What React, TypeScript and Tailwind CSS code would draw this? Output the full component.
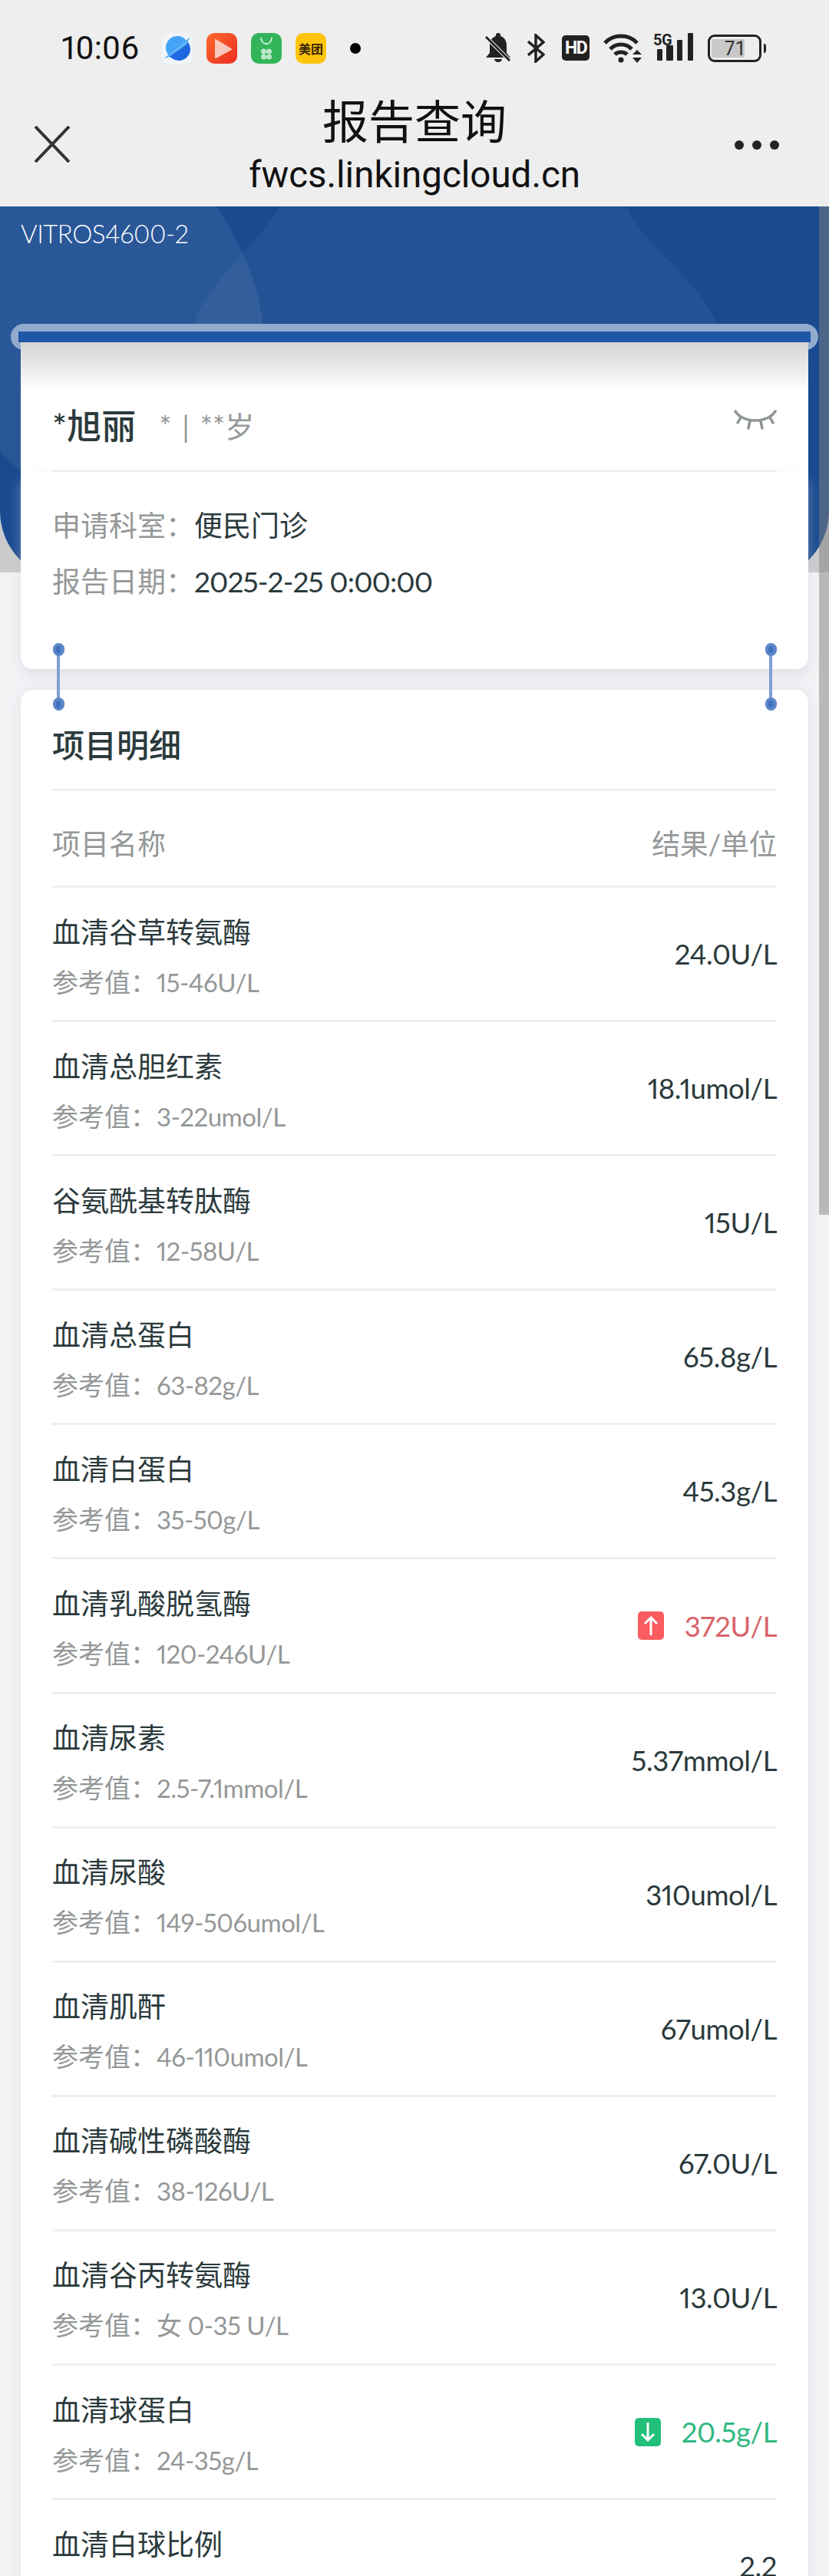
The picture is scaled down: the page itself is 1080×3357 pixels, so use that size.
const items = [
  { name: '血清谷草转氨酶', ref: '15-46U/L', value: '24.0U/L' },
  { name: '血清总胆红素', ref: '3-22umol/L', value: '18.1umol/L' },
  { name: '谷氨酰基转肽酶', ref: '12-58U/L', value: '15U/L' },
  { name: '血清总蛋白', ref: '63-82g/L', value: '65.8g/L' },
  { name: '血清白蛋白', ref: '35-50g/L', value: '45.3g/L' },
  { name: '血清乳酸脱氢酶', ref: '120-246U/L', value: '372U/L', flag: 'up' },
  { name: '血清尿素', ref: '2.5-7.1mmol/L', value: '5.37mmol/L' },
  { name: '血清尿酸', ref: '149-506umol/L', value: '310umol/L' },
  { name: '血清肌酐', ref: '46-110umol/L', value: '67umol/L' },
  { name: '血清碱性磷酸酶', ref: '38-126U/L', value: '67.0U/L' },
  { name: '血清谷丙转氨酶', ref: '女 0-35 U/L', value: '13.0U/L' },
  { name: '血清球蛋白', ref: '24-35g/L', value: '20.5g/L', flag: 'down' },
  { name: '血清白球比例', ref: '1.2-2.5', value: '2.2' },
]

function StatusBar() {
  return (
    <div className="flex h-[110px] items-center pl-[80px] pt-[15px] text-[#111]">
      <span className="w-[131px] font-['Roboto',sans-serif] text-[42px] leading-none">10:06</span>
      <div className="flex items-center gap-[18px]">
        <svg width="40" height="40" viewBox="0 0 40 40">
          <rect width="40" height="40" rx="10" fill="#f1f4f8" />
          <circle cx="20" cy="19" r="15" fill="#45a4f7" />
          <path d="M7 29 L34 12 A15 15 0 0 1 13 33 Z" fill="#1f68e0" />
          <path d="M3 33 L37 5 L32 15 L8 32 Z" fill="#5db5fa" />
        </svg>
        <svg width="40" height="40" viewBox="0 0 40 40">
          <defs>
            <linearGradient id="red" x1="0" y1="0" x2="1" y2="1">
              <stop offset="0" stopColor="#fb6a2c" />
              <stop offset="1" stopColor="#ec2c20" />
            </linearGradient>
          </defs>
          <rect width="40" height="40" rx="10" fill="url(#red)" />
          <path d="M12 9 L32 21 L12 32 Z" fill="#fbc9bb" strokeLinejoin="round" stroke="#fbc9bb" strokeWidth="2" />
        </svg>
        <svg width="40" height="40" viewBox="0 0 40 40">
          <rect width="40" height="40" rx="10" fill="#34b45a" />
          <path d="M13 6 C14 17 26 17 27 6" fill="none" stroke="#d3f0da" strokeWidth="2" />
          <circle cx="16.500" cy="24" r="3.500" fill="#bfe8c8" />
          <circle cx="23.500" cy="24" r="3.500" fill="#bfe8c8" />
          <circle cx="16.500" cy="31" r="3.500" fill="#bfe8c8" />
          <circle cx="23.500" cy="31" r="3.500" fill="#bfe8c8" />
        </svg>
        <div className="flex h-[40px] w-[40px] items-center justify-center rounded-[10px] bg-[#fec40c] font-['Noto_Sans_CJK_SC',sans-serif] text-[16px] font-bold leading-none text-[#3b2a05]">美团</div>
      </div>
      <span className="ml-[31px] h-[14px] w-[14px] rounded-full bg-black" />
      <div className="ml-[162px] w-[34px]">
        <svg width="34" height="40" viewBox="0 0 34 40">
          <path d="M17 0 a3 3 0 0 1 3 4 C26 6 28 11 28 17 V26 L33 32 H1 L6 26 V17 C6 11 8 6 14 4 a3 3 0 0 1 3 -4Z" fill="#222" />
          <path d="M12 34 H22 A5 4 0 0 1 12 34Z" fill="#222" />
          <path d="M1 5 L33 37" stroke="#eee" strokeWidth="5" />
          <path d="M1 5 L32 36" stroke="#222" strokeWidth="3" />
        </svg>
      </div>
      <svg className="ml-[21px]" width="23" height="38" viewBox="0 0 23 38" fill="none" stroke="#222" strokeWidth="3.500">
        <path d="M1 10 L21 27 L11 36 V2 L21 11 L1 28" />
      </svg>
      <div className="ml-[22px] flex h-[33px] w-[36px] items-center justify-center rounded-[5px] bg-[#222] font-['Roboto',sans-serif] text-[23px] font-bold leading-none tracking-[-1.5px] text-white">HD</div>
      <svg className="ml-[18px]" width="50" height="40" viewBox="0 0 50 40" fill="none" stroke="#222" strokeWidth="5">
        <path d="M2 13 C13 1 33 1 44 13" />
        <path d="M9 21 C16 13 30 13 37 21" />
        <path d="M15 28 C19 24 27 24 31 28" />
        <circle cx="23" cy="35" r="3.500" fill="#222" stroke="none" />
        <path d="M38 28 L44 22 L50 28Z" fill="#222" stroke="none" />
        <path d="M38 32 L50 32 L44 39Z" fill="#222" stroke="none" />
      </svg>
      <div className="relative ml-[15px] h-[40px] w-[54px]">
        <span className="absolute left-0 top-[-1px] font-['Roboto',sans-serif] text-[20px] font-bold leading-[20px] tracking-[-0.5px] text-[#222]">5G</span>
        <svg className="absolute left-[5px] top-0" width="49" height="36" viewBox="0 0 49 36" fill="#222">
          <rect x="0" y="21" width="7" height="15" rx="1" />
          <rect x="12" y="16" width="9" height="20" rx="1" />
          <rect x="26" y="9" width="7" height="27" rx="1" />
          <rect x="40" y="0" width="7" height="36" rx="1" />
        </svg>
      </div>
      <div className="relative ml-[17px] h-[36px] w-[70px] rounded-[9px] border-[3px] border-[#222]">
        <div className="absolute bottom-[3px] left-[2px] top-[3px] w-[43px] bg-[#c8c8c8]" />
        <span className="absolute left-[19px] top-[2px] font-['Roboto',sans-serif] text-[26px] leading-[26px] tracking-[1px] text-[#333]">71</span>
        <div className="absolute right-[-9px] top-[9px] h-[12px] w-[3px] rounded-r bg-[#222]" />
      </div>
    </div>
  )
}

function NavBar() {
  return (
    <div className="relative h-[159px] text-center text-[#111]">
      <svg className="absolute left-[45px] top-[54px]" width="46" height="48" viewBox="0 0 46 48" fill="none" stroke="#333" strokeWidth="4">
        <path d="M1 1 L45 47 M45 1 L1 47" />
      </svg>
      <div className="pt-[10px] font-['Noto_Sans_CJK_SC',sans-serif] text-[60px] leading-[70px]">报告查询</div>
      <div className="mt-[11px] font-['Roboto',sans-serif] text-[47.500px] leading-[54px]">fwcs.linkingcloud.cn</div>
      <div className="absolute left-[957px] top-[73px] flex gap-[11px]">
        <span className="h-[12px] w-[12px] rounded-full bg-[#222]" />
        <span className="h-[12px] w-[12px] rounded-full bg-[#222]" />
        <span className="h-[12px] w-[12px] rounded-full bg-[#222]" />
      </div>
    </div>
  )
}

function Hero() {
  return (
    <div className="absolute inset-x-0 top-0 h-[477px] overflow-hidden bg-[#cbcbcd]">
      <div className="relative h-[487px] overflow-hidden rounded-b-[90px] bg-[#1a4b91]">
        <svg className="absolute inset-0" width="1080" height="487" viewBox="0 0 1080 487">
          <path d="M0 0 H282 C320 60 342 110 346 190 L346 300 L27 345 L0 320 Z" fill="#fff" fillOpacity="0.07" />
          <path d="M365 0 H816 C850 70 930 100 945 190 L945 300 L240 300 L245 190 C250 110 320 70 365 0Z" fill="#fff" fillOpacity="0.045" />
        </svg>
      </div>
    </div>
  )
}

function Connector({ className }: { className: string }) {
  return (
    <div className={`absolute top-[-34px] z-10 flex h-[88px] w-[16px] flex-col items-center ${className}`}>
      <div className="absolute inset-y-[8px] w-[4px] bg-[#7fa0d4]" />
      <div className="relative flex h-[17px] w-[15px] items-center justify-center rounded-full bg-[#5b87c9]">
        <div className="h-[9px] w-[6px] rounded-full bg-[#3f70bb]" />
      </div>
      <div className="relative mt-auto flex h-[17px] w-[15px] items-center justify-center rounded-full bg-[#5b87c9]">
        <div className="h-[9px] w-[6px] rounded-full bg-[#3f70bb]" />
      </div>
    </div>
  )
}

function Flag({ kind }: { kind: string }) {
  const up = kind === 'up'
  return (
    <div className={`mr-[27px] flex h-[37px] w-[34px] items-center justify-center rounded-[5px] ${up ? 'bg-[#fb5c60]' : 'bg-[#22c07a]'}`}>
      <svg width="20" height="26" viewBox="0 0 20 26" fill="none" stroke="#fff" strokeWidth="3" className={up ? '' : 'rotate-180'}>
        <path d="M10 25 V2 M2 10 L10 2 L18 10" />
      </svg>
    </div>
  )
}

export default function App() {
  return (
    <div className="relative h-[3357px] w-[1080px] overflow-hidden bg-[#f2f3f5] font-['Lato','Noto_Sans_CJK_SC',sans-serif] text-[#2b3a3c] [font-feature-settings:'pnum']">
      <div className="bg-[#eeeeee]">
        <StatusBar />
        <NavBar />
      </div>

      <div className="relative">
        <Hero />
        <div className="absolute right-0 top-0 z-20 h-[1314px] w-[13px] bg-[#808080]/50" />

        <div className="relative">
          <div className="pl-[27px] pt-[15px] text-[33px] font-light leading-[40px] tracking-[-0.5px] text-white">VITROS4600-2</div>

          <div className="mx-[14px] mt-[98px] h-[34px] rounded-[17px] bg-[#93aacf] px-[10px] pt-[10px]">
            <div className="h-[14px] bg-[#1f57a8]" />
          </div>

          <div className="relative mx-[27px] mt-[-10px]">
            <div className="mb-[-16px] h-[185px] bg-[linear-gradient(#d4d4d5,#ffffff_64px)] px-[41px]">
              <div className="flex h-[167px] items-center pt-[51px]">
                <span className="text-[45px] font-medium leading-[56px]">*旭丽</span>
                <span className="ml-[30px] text-[38px] leading-[56px] text-[#959898]">*<span className="mx-[14px]">|</span>**岁</span>
                <svg className="ml-auto mt-[-14px]" width="56" height="30" viewBox="0 0 56 30" fill="none" stroke="#8f9494" strokeWidth="3.500" strokeLinecap="round">
                  <path d="M2 3 C12 19 44 19 54 3" />
                  <path d="M9 11 L5 18 M21 16 L19 25 M35 16 L37 25 M47 11 L51 18" />
                </svg>
              </div>
              <div className="h-[3px] bg-[#eeeeee]" />
            </div>

            <div className="relative flex h-[257px] flex-col rounded-[16px] bg-white px-[41px] pt-[50px] text-[37px] leading-[40px] shadow-[0_8px_16px_rgba(200,205,215,0.45)]">
              <div className="flex">
                <span className="w-[185px] text-[#959898]">申请科室：</span>
                <span>便民门诊</span>
              </div>
              <div className="mt-[33px] flex">
                <span className="w-[185px] text-[#959898]">报告日期：</span>
                <span className="tracking-[-0.9px]">2025-2-25 0:00:00</span>
              </div>
            </div>

            <div className="relative h-[27px]">
              <Connector className="left-[41px]" />
              <Connector className="right-[41px]" />
            </div>

            <div className="rounded-t-[16px] bg-white shadow-[0_0_16px_rgba(200,205,215,0.4)]">
              <div className="px-[41px]">
                <div className="flex h-[129px] items-center pt-[14px] text-[42px] font-medium leading-[50px]">项目明细</div>
                <div className="h-[3px] bg-[#eeeeee]" />
              </div>
              <div className="rounded-t-[16px] bg-white px-[41px]">
                <div className="flex h-[126px] items-center justify-between border-b-[3px] border-[#eeeeee] pt-[14px] text-[37px] leading-[44px] text-[#959898]">
                  <span>项目名称</span>
                  <span className="tracking-[-0.4px]">结果/单位</span>
                </div>
                {items.map(item => (
                  <div key={item.name} className="flex h-[175.1px] items-center justify-between border-b-[3px] border-[#eeeeee]">
                    <div className="pt-[8px]">
                      <div className="text-[37px] leading-[40px]">{item.name}</div>
                      <div className="mt-[25px] text-[34px] leading-[40px] text-[#959898]">参考值：<span className="text-[33px] tracking-[-0.5px]">{item.ref}</span></div>
                    </div>
                    <div className={`flex items-center text-[36.500px] leading-[44px] tracking-[-0.4px] ${item.flag === 'up' ? 'text-[#d9636b]' : item.flag === 'down' ? 'text-[#2fb87f]' : ''}`}>
                      {item.flag && <Flag kind={item.flag} />}
                      {item.value}
                    </div>
                  </div>
                ))}
              </div>
            </div>
          </div>
        </div>
      </div>
    </div>
  )
}
